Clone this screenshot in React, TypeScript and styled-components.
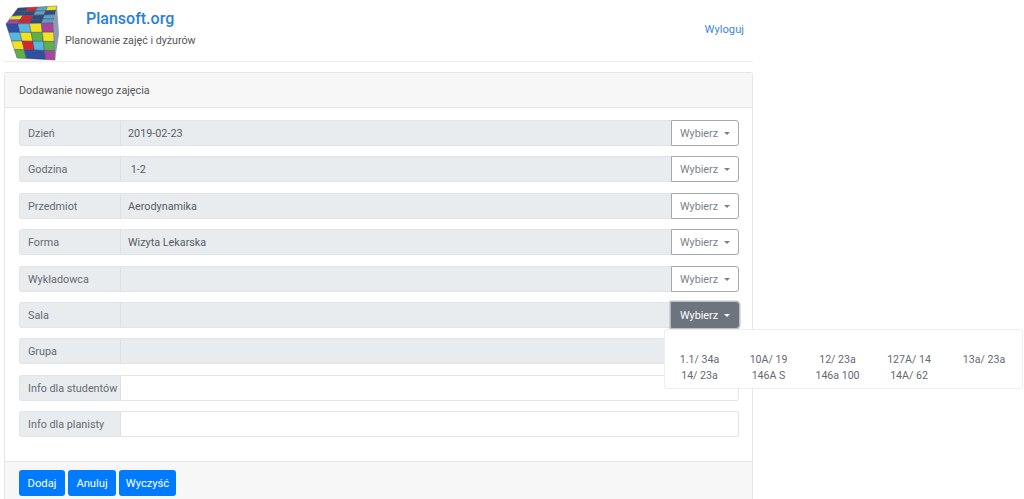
import React from "react";
import styled, { createGlobalStyle } from "styled-components";

const GlobalStyle = createGlobalStyle`
  html, body {
    margin: 0;
    padding: 0;
    background: #fff;
    font-family: Roboto, "Noto Sans", sans-serif;
    font-size: 10.8px;
    color: #495057;
  }
`;

const Page = styled.div`
  width: 749px;
  height: 499px;
  margin-left: 4px;
  display: flex;
  flex-direction: column;
`;

const Header = styled.header`
  height: 61px;
  border-bottom: 1px solid #eeeeee;
  display: flex;
  justify-content: space-between;
`;

const Brand = styled.div`
  display: flex;
  align-items: flex-start;
`;

const BrandText = styled.div`
  display: flex;
  flex-direction: column;
  margin-left: 3px;
`;

const BrandName = styled.div`
  font-size: 16px;
  line-height: 20px;
  font-weight: 500;
  color: #2a7fdc;
  margin: 9px 0 0 21px;
`;

const Tagline = styled.div`
  font-size: 10.7px;
  line-height: 16px;
  color: #555;
  margin-top: 4px;
`;

const Logout = styled.a`
  font-size: 11.2px;
  line-height: 16px;
  color: #3f88d8;
  margin: 22px 9px 0 0;
`;

const Card = styled.section`
  margin-top: 10px;
  flex: 1;
  min-height: 0;
  border: 1px solid #e6e6e6;
  border-bottom: 0;
  border-radius: 3px 3px 0 0;
  display: flex;
  flex-direction: column;
`;

const CardTitle = styled.div`
  height: 34px;
  line-height: 35px;
  padding-left: 14px;
  background: #f7f7f7;
  border-bottom: 1px solid #e6e6e6;
  color: #555;
`;

const CardBody = styled.div`
  padding: 12px 13px 0 14px;
  height: 353px;
  display: flex;
  flex-direction: column;
  gap: 10.4px;
  box-sizing: border-box;
`;

const Row = styled.div`
  display: flex;
  height: 26px;
`;

const Label = styled.div`
  width: 102px;
  box-sizing: border-box;
  padding-left: 8px;
  background: #e9ecef;
  border: 1px solid #e2e5e8;
  border-right: 1px solid #dde0e3;
  border-radius: 3px 0 0 3px;
  line-height: 25px;
  color: #636a71;
  white-space: nowrap;
`;

const Field = styled.div<{ $readOnly: boolean; $last: boolean }>`
  flex: 1;
  box-sizing: border-box;
  padding-left: 7px;
  background: ${(p) => (p.$readOnly ? "#e9ecef" : "#fff")};
  border: 1px solid #e2e5e8;
  border-left: 0;
  border-right: ${(p) => (p.$last ? "1px solid #e2e5e8" : "0")};
  border-radius: ${(p) => (p.$last ? "0 3px 3px 0" : "0")};
  line-height: 25px;
  color: #555c63;
  white-space: pre;
`;

const Picker = styled.div`
  position: relative;
  width: 68px;
`;

const PickerButton = styled.button<{ $open: boolean }>`
  width: 68px;
  height: 26px;
  padding: 1px 0 0;
  font: inherit;
  border: 1px solid ${(p) => (p.$open ? "#6c757d" : "#a3a9ae")};
  border-radius: 0 3px 3px 0;
  background: ${(p) => (p.$open ? "#6c757d" : "#fff")};
  color: ${(p) => (p.$open ? "#fff" : "#7a8289")};
  box-shadow: ${(p) => (p.$open ? "0 0 0 1.5px rgba(108,117,125,0.45)" : "none")};
  display: flex;
  align-items: center;
  justify-content: center;
`;

const Caret = styled.span`
  display: inline-block;
  margin-left: 6px;
  border-top: 3.5px solid currentColor;
  border-left: 3.5px solid transparent;
  border-right: 3.5px solid transparent;
`;

const Menu = styled.div`
  position: absolute;
  top: 27px;
  left: -7px;
  width: 359px;
  height: 60px;
  box-sizing: border-box;
  background: #fff;
  border: 1px solid #eeeeee;
  border-radius: 3px;
  padding-top: 22px;
  display: grid;
  grid-template-columns: 69px 69px 69px 74px 76px;
  grid-auto-rows: 16px;
  z-index: 2;
`;

const MenuItem = styled.div`
  font-size: 10.6px;
  line-height: 16px;
  text-align: center;
  color: #636a71;
  white-space: nowrap;
`;

const CardFooter = styled.div`
  flex: 1;
  min-height: 0;
  background: #f7f7f7;
  border-top: 1px solid #e6e6e6;
  padding: 8px 14px 0;
  display: flex;
  gap: 3px;
  align-items: flex-start;
`;

const PrimaryButton = styled.button<{ $width: number }>`
  width: ${(p) => p.$width}px;
  height: 26px;
  padding: 1px 0 0;
  font: inherit;
  font-size: 11.2px;
  color: #fff;
  background: #007bff;
  border: 0;
  border-radius: 3px;
`;

const CubeSvg = styled.svg`
  flex: none;
  filter: blur(0.4px);
`;

type Point = [number, number];

// bilinear point inside a quad: a top-left, b top-right, c bottom-right, d bottom-left
const lerpQuad = (a: Point, b: Point, c: Point, d: Point, u: number, v: number): string => {
  const x = (1 - v) * ((1 - u) * a[0] + u * b[0]) + v * ((1 - u) * d[0] + u * c[0]);
  const y = (1 - v) * ((1 - u) * a[1] + u * b[1]) + v * ((1 - u) * d[1] + u * c[1]);
  return `${x.toFixed(1)},${y.toFixed(1)}`;
};

const B = "#2f4fa0";
const C = "#55b8e0";
const Y = "#f2e21e";
const P = "#a8479a";
const G = "#5fb04a";
const R = "#d8262e";
const N = "#2c4d78";
const T = "#5f9fc0";

const frontColors = [
  [B, C, Y, P],
  [C, Y, G, Y],
  [Y, R, C, G],
  [G, B, B, P],
];

const topColors = [
  [N, R, T, Y],
  [N, N, T, N],
  [Y, R, N, T],
  [P, R, N, T],
];

const Face: React.FC<{ quad: [Point, Point, Point, Point]; colors: string[][] }> = ({ quad, colors }) => (
  <>
    {colors.map((line, r) =>
      line.map((color, c) => {
        const [a, b, cc, d] = quad;
        const pts = [
          lerpQuad(a, b, cc, d, c / 4, r / 4),
          lerpQuad(a, b, cc, d, (c + 1) / 4, r / 4),
          lerpQuad(a, b, cc, d, (c + 1) / 4, (r + 1) / 4),
          lerpQuad(a, b, cc, d, c / 4, (r + 1) / 4),
        ].join(" ");
        return <polygon key={`${r}-${c}`} points={pts} fill={color} stroke="#3a3a6a" strokeWidth="0.4" />;
      })
    )}
  </>
);

const Cube: React.FC = () => (
  <CubeSvg width="58" height="61" viewBox="4 0 58 61">
    <Face quad={[[18, 8], [57, 6], [53, 23], [6, 24]]} colors={topColors} />
    <polygon points="53,23 57,6 59,34 55,60" fill="#8f9bb0" />
    <Face quad={[[6, 24], [53, 23], [55, 60], [17, 58]]} colors={frontColors} />
  </CubeSvg>
);

interface iRow {
  label: string;
  value: string;
  open?: boolean;
}

const pickerRows: iRow[] = [
  { label: "Dzień", value: "2019-02-23" },
  { label: "Godzina", value: " 1-2" },
  { label: "Przedmiot", value: "Aerodynamika" },
  { label: "Forma", value: "Wizyta Lekarska" },
  { label: "Wykładowca", value: "" },
  { label: "Sala", value: "", open: true },
  { label: "Grupa", value: "" },
];

const rooms = [
  "1.1/ 34a",
  "10A/ 19",
  "12/ 23a",
  "127A/ 14",
  "13a/ 23a",
  "14/ 23a",
  "146A S",
  "146a 100",
  "14A/ 62",
];

const App: React.FC = () => {
  return (
    <Page>
      <GlobalStyle />
      <Header>
        <Brand>
          <Cube />
          <BrandText>
            <BrandName>Plansoft.org</BrandName>
            <Tagline>Planowanie zajęć i dyżurów</Tagline>
          </BrandText>
        </Brand>
        <Logout>Wyloguj</Logout>
      </Header>
      <Card>
        <CardTitle>Dodawanie nowego zajęcia</CardTitle>
        <CardBody>
          {pickerRows.map((row) => (
            <Row key={row.label}>
              <Label>{row.label}</Label>
              <Field $readOnly $last={false}>
                {row.value}
              </Field>
              <Picker>
                <PickerButton $open={!!row.open}>
                  Wybierz
                  <Caret />
                </PickerButton>
                {row.open && (
                  <Menu>
                    {rooms.map((room) => (
                      <MenuItem key={room}>{room}</MenuItem>
                    ))}
                  </Menu>
                )}
              </Picker>
            </Row>
          ))}
          <Row>
            <Label>Info dla studentów</Label>
            <Field $readOnly={false} $last />
          </Row>
          <Row>
            <Label>Info dla planisty</Label>
            <Field $readOnly={false} $last />
          </Row>
        </CardBody>
        <CardFooter>
          <PrimaryButton $width={46}>Dodaj</PrimaryButton>
          <PrimaryButton $width={48}>Anuluj</PrimaryButton>
          <PrimaryButton $width={57}>Wyczyść</PrimaryButton>
        </CardFooter>
      </Card>
    </Page>
  );
};

export default App;
